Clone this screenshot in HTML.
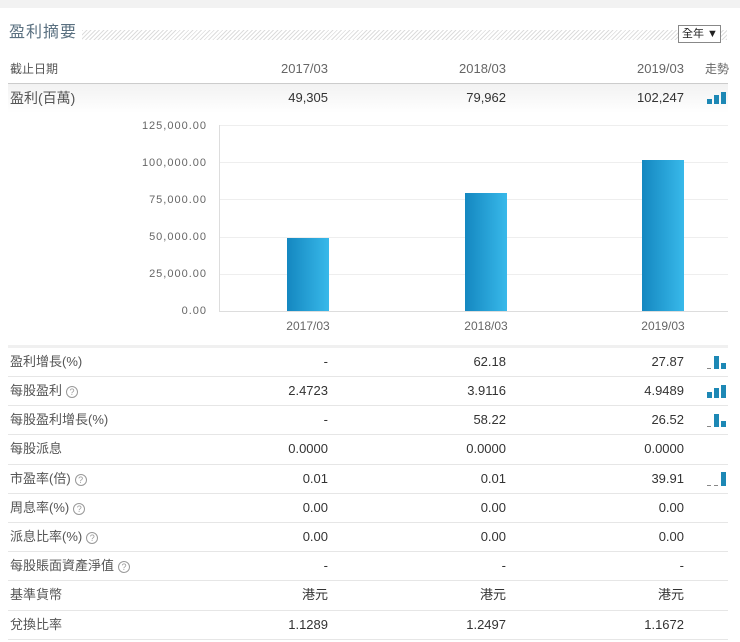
<!DOCTYPE html>
<html><head><meta charset="utf-8"><style>
*{margin:0;padding:0;box-sizing:border-box}
body{width:740px;height:642px;background:#fff;font-family:"Liberation Sans","Noto Sans CJK TC",sans-serif;position:relative;overflow:hidden;color:#333}
.top{position:absolute;left:0;top:0;width:740px;height:8px;background:#f2f2f2}
.title{position:absolute;left:9px;top:22px;font-size:16px;line-height:22px;color:#5a7080;letter-spacing:1px}
.hatch{position:absolute;left:82px;top:30px;width:645px;height:10px;background:repeating-linear-gradient(135deg,#ddd 0 1px,#fff 1px 3px)}
.sel{position:absolute;left:678px;top:25px;width:43px;height:18px;border:1px solid #888;background:#fff;font-size:11px;line-height:16px;padding-left:3px;color:#222;white-space:nowrap}
.row{position:absolute;left:8px;width:720px;font-size:13px;border-bottom:1px solid #e6e6e6}
.row span{position:absolute;top:0;white-space:nowrap;line-height:inherit}
.lab{left:2px;color:#555}
.v1,.v2,.v3{text-align:right;width:120px}
.v1{left:200px}.v2{left:378px}.v3{left:556px}
.q{display:inline-block;width:12px;height:12px;border:1px solid #999;border-radius:50%;font-size:9px;text-align:center;line-height:10px;color:#999;margin-left:4px;vertical-align:0;font-style:normal}
.tr{position:absolute;left:699px}
.b{position:absolute;bottom:0;width:5px;background:#1d88b5}
.ax{position:absolute;right:533px;font-size:11px;color:#666;letter-spacing:1px}
.gl{position:absolute;left:219px;width:509px;height:1px;background:#eee}
.bar{position:absolute;width:42px;background:linear-gradient(90deg,#1487c0,#38b9ea)}
.xl{position:absolute;top:319px;font-size:12px;color:#666;width:80px;text-align:center}
.r{height:29px;line-height:28px}
</style></head><body>
<div class="top"></div>
<div class="title">盈利摘要</div>
<div class="hatch"></div>
<div class="sel">全年 ▼</div>

<div class="row" style="top:57px;height:27px;line-height:24px;border-bottom:1px solid #ccc"><span class="lab" style="font-size:12px">截止日期</span><span class="v1" style="color:#666">2017/03</span><span class="v2" style="color:#666">2018/03</span><span class="v3" style="color:#666">2019/03</span><span style="left:697px;color:#666;font-size:12px">走勢</span></div>
<div class="row" style="top:84px;height:29px;line-height:28px;background:linear-gradient(#f2f2f2,#fff);border:none"><span class="lab" style="font-size:14px">盈利(百萬)</span><span class="v1">49,305</span><span class="v2">79,962</span><span class="v3">102,247</span>
<div class="tr" style="top:8px;width:24px;height:12px"><div class="b" style="left:0;height:5px"></div><div class="b" style="left:7px;height:9px"></div><div class="b" style="left:14px;height:12px"></div></div></div>

<div class="ax" style="top:120px">125,000.00</div>
<div class="ax" style="top:157px">100,000.00</div>
<div class="ax" style="top:194px">75,000.00</div>
<div class="ax" style="top:231px">50,000.00</div>
<div class="ax" style="top:268px">25,000.00</div>
<div class="ax" style="top:305px">0.00</div>
<div class="gl" style="top:125px"></div><div class="gl" style="top:162px"></div><div class="gl" style="top:199px"></div><div class="gl" style="top:237px"></div><div class="gl" style="top:274px"></div>
<div class="gl" style="top:311px;background:#ddd"></div>
<div style="position:absolute;left:219px;top:125px;width:1px;height:187px;background:#ddd"></div>
<div class="bar" style="left:287px;top:238px;height:73px"></div>
<div class="bar" style="left:465px;top:193px;height:118px"></div>
<div class="bar" style="left:642px;top:160px;height:151px"></div>
<div class="xl" style="left:268px">2017/03</div>
<div class="xl" style="left:446px">2018/03</div>
<div class="xl" style="left:623px">2019/03</div>
<div style="position:absolute;left:8px;top:345px;width:720px;height:3px;background:#f0f0f0"></div>

<div class="row r" style="top:348px"><span class="lab">盈利增長(%)</span><span class="v1">-</span><span class="v2">62.18</span><span class="v3">27.87</span>
<div class="tr" style="top:7px;width:24px;height:14px"><div class="b" style="left:0;height:1px;background:#888;width:4px"></div><div class="b" style="left:7px;height:13px"></div><div class="b" style="left:14px;height:6px"></div></div></div>
<div class="row r" style="top:377px"><span class="lab">每股盈利<i class="q">?</i></span><span class="v1">2.4723</span><span class="v2">3.9116</span><span class="v3">4.9489</span>
<div class="tr" style="top:8px;width:24px;height:13px"><div class="b" style="left:0;height:6px"></div><div class="b" style="left:7px;height:10px"></div><div class="b" style="left:14px;height:13px"></div></div></div>
<div class="row r" style="top:406px"><span class="lab">每股盈利增長(%)</span><span class="v1">-</span><span class="v2">58.22</span><span class="v3">26.52</span>
<div class="tr" style="top:7px;width:24px;height:14px"><div class="b" style="left:0;height:1px;background:#888;width:4px"></div><div class="b" style="left:7px;height:13px"></div><div class="b" style="left:14px;height:6px"></div></div></div>
<div class="row r" style="top:435px;height:30px"><span class="lab">每股派息</span><span class="v1">0.0000</span><span class="v2">0.0000</span><span class="v3">0.0000</span></div>
<div class="row r" style="top:465px"><span class="lab">市盈率(倍)<i class="q">?</i></span><span class="v1">0.01</span><span class="v2">0.01</span><span class="v3">39.91</span>
<div class="tr" style="top:7px;width:24px;height:14px"><div class="b" style="left:0;height:1px;background:#888;width:4px"></div><div class="b" style="left:7px;height:1px;background:#888;width:4px"></div><div class="b" style="left:14px;height:14px"></div></div></div>
<div class="row r" style="top:494px"><span class="lab">周息率(%)<i class="q">?</i></span><span class="v1">0.00</span><span class="v2">0.00</span><span class="v3">0.00</span></div>
<div class="row r" style="top:523px"><span class="lab">派息比率(%)<i class="q">?</i></span><span class="v1">0.00</span><span class="v2">0.00</span><span class="v3">0.00</span></div>
<div class="row r" style="top:552px"><span class="lab">每股賬面資產淨值<i class="q">?</i></span><span class="v1">-</span><span class="v2">-</span><span class="v3">-</span></div>
<div class="row r" style="top:581px;height:30px"><span class="lab">基準貨幣</span><span class="v1">港元</span><span class="v2">港元</span><span class="v3">港元</span></div>
<div class="row r" style="top:611px"><span class="lab">兌換比率</span><span class="v1">1.1289</span><span class="v2">1.2497</span><span class="v3">1.1672</span></div>
</body></html>
